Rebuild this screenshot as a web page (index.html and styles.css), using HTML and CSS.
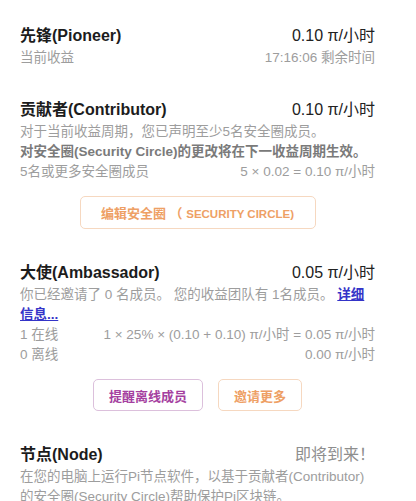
FILE: index.html
```html
<!DOCTYPE html>
<html lang="zh-CN">
<head>
    <meta charset="UTF-8">
    <meta name="viewport" content="width=device-width, initial-scale=1.0">
    <title>收益</title>
    <link rel="stylesheet" href="styles.css">
</head>
<body>
    <div class="container">
        <section class="role role-first">
            <div class="role-head">
                <h2>先锋(Pioneer)</h2>
                <span class="rate">0.10 π/小时</span>
            </div>
            <div class="row">
                <span>当前收益</span>
                <span>17:16:06 剩余时间</span>
            </div>
        </section>

        <section class="role">
            <div class="role-head">
                <h2>贡献者(Contributor)</h2>
                <span class="rate">0.10 π/小时</span>
            </div>
            <p class="note">对于当前收益周期，您已声明至少5名安全圈成员。</p>
            <p class="note strong">对安全圈(Security Circle)的更改将在下一收益周期生效。</p>
            <div class="row">
                <span>5名或更多安全圈成员</span>
                <span>5 × 0.02 = 0.10 π/小时</span>
            </div>
            <div class="actions">
                <button type="button" class="btn btn-orange btn-wide">编辑安全圈 （ <span class="caps">SECURITY CIRCLE)</span></button>
            </div>
        </section>

        <section class="role">
            <div class="role-head">
                <h2>大使(Ambassador)</h2>
                <span class="rate">0.05 π/小时</span>
            </div>
            <p class="note">你已经邀请了 0 名成员。 您的收益团队有 1名成员。 <a href="#" class="more">详细信息...</a></p>
            <div class="row">
                <span>1 在线</span>
                <span>1 × 25% × (0.10 + 0.10) π/小时 = 0.05 π/小时</span>
            </div>
            <div class="row">
                <span>0 离线</span>
                <span>0.00 π/小时</span>
            </div>
            <div class="actions">
                <button type="button" class="btn btn-purple">提醒离线成员</button>
                <button type="button" class="btn btn-orange">邀请更多</button>
            </div>
        </section>

        <section class="role">
            <div class="role-head">
                <h2>节点(Node)</h2>
                <span class="rate soon">即将到来！</span>
            </div>
            <p class="note">在您的电脑上运行Pi节点软件，以基于贡献者(Contributor)的安全圈(Security Circle)帮助保护Pi区块链。</p>
        </section>
    </div>
</body>
</html>
```

FILE: styles.css
```css
body {
    margin: 0;
    background: #fff;
    font-family: "Liberation Sans", "Noto Sans CJK SC", sans-serif;
    color: #222;
}
.container {
    padding: 25px 41px 0 20px;
}
.role {
    margin-bottom: 33px;
}
.role-first {
    margin-bottom: 31px;
}
.role-head {
    display: flex;
    justify-content: space-between;
    align-items: baseline;
    line-height: 22px;
    margin-bottom: 1px;
}
.role-head h2 {
    margin: 0;
    font-size: 16px;
    font-weight: 700;
    color: #1c1c1c;
}
.rate {
    font-size: 16px;
    color: #222;
}
.rate.soon {
    color: #8e8e8e;
}
.row {
    display: flex;
    justify-content: space-between;
    font-size: 13.5px;
    line-height: 20px;
    color: #9d9d9d;
}
.note {
    margin: 0;
    font-size: 13.5px;
    line-height: 20px;
    color: #9d9d9d;
}
.note.strong {
    color: #7a7a7a;
    font-weight: 700;
}
.more {
    color: #3434c8;
    font-weight: 700;
}
.actions {
    display: flex;
    justify-content: center;
    gap: 15px;
    margin-top: 14px;
}
.btn {
    height: 32px;
    padding: 0 15px;
    background: #fff;
    border-radius: 5px;
    font-family: inherit;
    font-size: 13px;
    font-weight: 700;
    white-space: nowrap;
}
.btn-wide {
    width: 236px;
    height: 33px;
}
.btn .caps {
    font-size: 11.5px;
}
.btn-orange {
    border: 1px solid #f6d8c0;
    color: #eea065;
}
.btn-purple {
    border: 1px solid #dcc0dc;
    color: #a53fa0;
}
```
